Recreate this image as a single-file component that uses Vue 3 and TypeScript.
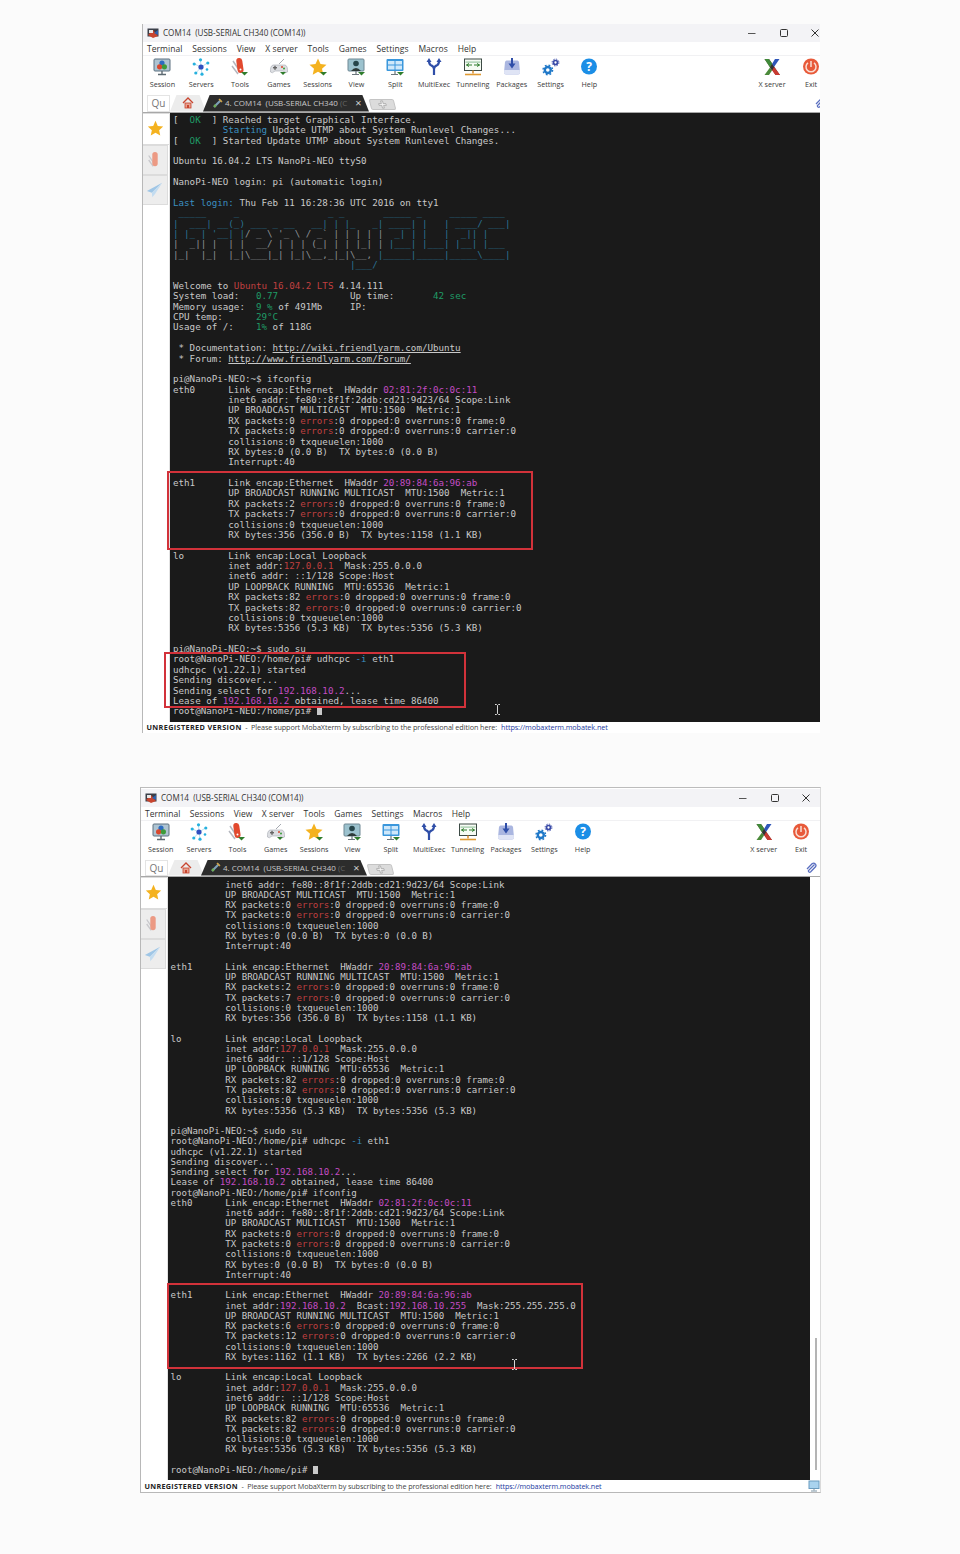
<script setup lang="ts">
type Seg = { c: string; t: string }

function parse(line: string): Seg[] {
  const out: Seg[] = []
  const re = /\{(\w)\|([^}]*)\}/g
  let last = 0
  let m: RegExpExecArray | null
  while ((m = re.exec(line))) {
    if (m.index > last) out.push({ c: '', t: line.slice(last, m.index) })
    out.push({ c: 'c-' + m[1], t: m[2] })
    last = m.index + m[0].length
  }
  if (last < line.length) out.push({ c: '', t: line.slice(last) })
  return out
}

const eth0 = [
  'eth0      Link encap:Ethernet  HWaddr {m|02:81:2f:0c:0c:11}',
  '          inet6 addr: fe80::8f1f:2ddb:cd21:9d23/64 Scope:Link',
  '          UP BROADCAST MULTICAST  MTU:1500  Metric:1',
  '          RX packets:0 {r|errors}:0 dropped:0 overruns:0 frame:0',
  '          TX packets:0 {r|errors}:0 dropped:0 overruns:0 carrier:0',
  '          collisions:0 txqueuelen:1000',
  '          RX bytes:0 (0.0 B)  TX bytes:0 (0.0 B)',
  '          Interrupt:40',
  ''
]
const eth1a = [
  'eth1      Link encap:Ethernet  HWaddr {m|20:89:84:6a:96:ab}',
  '          UP BROADCAST RUNNING MULTICAST  MTU:1500  Metric:1',
  '          RX packets:2 {r|errors}:0 dropped:0 overruns:0 frame:0',
  '          TX packets:7 {r|errors}:0 dropped:0 overruns:0 carrier:0',
  '          collisions:0 txqueuelen:1000',
  '          RX bytes:356 (356.0 B)  TX bytes:1158 (1.1 KB)',
  ''
]
const lo = [
  'lo        Link encap:Local Loopback',
  '          inet addr:{r|127.0.0.1}  Mask:255.0.0.0',
  '          inet6 addr: ::1/128 Scope:Host',
  '          UP LOOPBACK RUNNING  MTU:65536  Metric:1',
  '          RX packets:82 {r|errors}:0 dropped:0 overruns:0 frame:0',
  '          TX packets:82 {r|errors}:0 dropped:0 overruns:0 carrier:0',
  '          collisions:0 txqueuelen:1000',
  '          RX bytes:5356 (5.3 KB)  TX bytes:5356 (5.3 KB)',
  ''
]
const dhcp = [
  'pi@NanoPi-NEO:~$ sudo su',
  'root@NanoPi-NEO:/home/pi# udhcpc {b|-i} eth1',
  'udhcpc (v1.22.1) started',
  'Sending discover...',
  'Sending select for {m|192.168.10.2}...',
  'Lease of {m|192.168.10.2} obtained, lease time 86400'
]

const firstLines = [
  '[  {g|OK}  ] Reached target Graphical Interface.',
  '         {b|Starting} Update UTMP about System Runlevel Changes...',
  '[  {g|OK}  ] Started Update UTMP about System Runlevel Changes.',
  '',
  'Ubuntu 16.04.2 LTS NanoPi-NEO ttyS0',
  '',
  'NanoPi-NEO login: pi (automatic login)',
  '',
  '{b|Last login:} Thu Feb 11 16:28:36 UTC 2016 on tty1',
  "{f| _____     _                _ _       _____ _     _____ ____ }",
  "{f||  ___| __(_) ___ _ __   __| | |_   _| ____| |   | ____/ ___|}",
  "{f|| |_ | '__| |}{q|/ _ \\ '_ \\ / _` | | | | |}{f|  _| | |   |  _|| |    }",
  "{q||  _|| |  | |  __/ | | | (_| | | |_| |}{f| |___| |___| |__| |___ }",
  "{q||_|  |_|  |_|\\___|_| |_|\\__,_|_|\\__,}{f| |_____|_____|_____\\____|}",
  "{f|                                |___/                        }",
  '',
  'Welcome to {r|Ubuntu 16.04.2 LTS} 4.14.111',
  'System load:   {g|0.77}             Up time:       {g|42 sec}',
  'Memory usage:  {g|9 %} of 491Mb     IP:',
  'CPU temp:      {g|29°C}',
  'Usage of /:    {g|1%} of 118G',
  '',
  ' * Documentation: {u|http://wiki.friendlyarm.com/Ubuntu}',
  ' * Forum: {u|http://www.friendlyarm.com/Forum/}',
  '',
  'pi@NanoPi-NEO:~$ ifconfig',
  ...eth0,
  ...eth1a,
  ...lo,
  ...dhcp,
  ''
]

const secondLines = [
  ...eth0.slice(1),
  ...eth1a,
  ...lo,
  ...dhcp,
  'root@NanoPi-NEO:/home/pi# ifconfig',
  ...eth0,
  'eth1      Link encap:Ethernet  HWaddr {m|20:89:84:6a:96:ab}',
  '          inet addr:{m|192.168.10.2}  Bcast:{m|192.168.10.255}  Mask:255.255.255.0',
  '          UP BROADCAST RUNNING MULTICAST  MTU:1500  Metric:1',
  '          RX packets:6 {r|errors}:0 dropped:0 overruns:0 frame:0',
  '          TX packets:12 {r|errors}:0 dropped:0 overruns:0 carrier:0',
  '          collisions:0 txqueuelen:1000',
  '          RX bytes:1162 (1.1 KB)  TX bytes:2266 (2.2 KB)',
  '',
  ...lo,
  ''
]

const windows = [
  { id: 'w1', lines: firstLines.map(parse) },
  { id: 'w2', lines: secondLines.map(parse) }
]

const menu = ['Terminal', 'Sessions', 'View', 'X server', 'Tools', 'Games', 'Settings', 'Macros', 'Help']
const tools = [
  { id: 'session', label: 'Session' },
  { id: 'servers', label: 'Servers' },
  { id: 'tools', label: 'Tools' },
  { id: 'games', label: 'Games' },
  { id: 'sessions', label: 'Sessions' },
  { id: 'view', label: 'View' },
  { id: 'split', label: 'Split' },
  { id: 'multi', label: 'MultiExec' },
  { id: 'tunnel', label: 'Tunneling' },
  { id: 'packages', label: 'Packages' },
  { id: 'settings', label: 'Settings' },
  { id: 'help', label: 'Help' }
]
</script>

<template>
  <div class="page">
    <section v-for="w in windows" :key="w.id" class="win" :class="w.id">
      <header class="title">
        <svg class="logo" viewBox="0 0 12 11" width="12" height="11">
          <rect x="0.5" y="0.5" width="11" height="8" fill="#3a3f48" />
          <path d="M1 7 L6 2 L11 8 L6 10 Z" fill="#c8452f" />
          <path d="M2 2 h4 v3 h-4 Z" fill="#e8e8e8" />
          <path d="M7 5 l4 -3 v5 Z" fill="#2c62b0" />
        </svg>
        <span class="title-text">COM14&nbsp; (USB-SERIAL CH340 (COM14))</span>
        <div class="controls">
          <svg viewBox="0 0 10 10" width="10" height="10"><path d="M1 5.500 H8.500" stroke="#555" fill="none" /></svg>
          <svg viewBox="0 0 10 10" width="10" height="10"><rect x="1.500" y="1.500" width="7" height="7" rx="1" stroke="#333" fill="none" /></svg>
          <svg viewBox="0 0 10 10" width="10" height="10"><path d="M1.500 1.500 L8.500 8.500 M8.500 1.500 L1.500 8.500" stroke="#333" fill="none" /></svg>
        </div>
      </header>

      <nav class="menu">
        <span v-for="m in menu" :key="m">{{ m }}</span>
      </nav>

      <div class="toolbar">
        <div v-for="t in tools" :key="t.id" class="tool">
          <svg class="icon" viewBox="0 0 20 20" width="20" height="20">
            <template v-if="t.id === 'session'">
              <rect x="2" y="2" width="16" height="12" rx="1" fill="#aec4d2" stroke="#5d7180" />
              <circle cx="10" cy="6" r="2.600" fill="#2d6cc0" />
              <circle cx="7.600" cy="9.800" r="2.600" fill="#d9482e" />
              <circle cx="12.400" cy="9.800" r="2.600" fill="#3d9b3a" />
              <path d="M10 14 V17 M6 17.500 H14" stroke="#5d6a72" stroke-width="1.400" />
            </template>
            <template v-else-if="t.id === 'servers'">
              <path d="M10 10 L9.500 3 M10 10 L3.500 7 M10 10 L16.500 6 M10 10 L5 16 M10 10 L11 17" stroke="#9fd2ea" stroke-width="0.700" />
              <circle cx="10" cy="10" r="2.600" fill="#2f4fc0" />
              <circle cx="9.500" cy="2.800" r="1.600" fill="#26b1de" />
              <circle cx="3.200" cy="7" r="1.600" fill="#26b1de" />
              <circle cx="16.800" cy="6" r="1.600" fill="#26b1de" />
              <circle cx="16" cy="12.500" r="1.300" fill="#26b1de" />
              <circle cx="4.800" cy="16" r="1.600" fill="#26b1de" />
              <circle cx="11" cy="17.200" r="1.600" fill="#26b1de" />
            </template>
            <template v-else-if="t.id === 'tools'">
              <path d="M3 4 L9 13 M2 9 L8 17" stroke="#b4b6be" stroke-width="1.500" />
              <rect x="7" y="1" width="6" height="15" rx="3" fill="#e2492e" transform="rotate(-8 10 9)" />
              <circle cx="10.500" cy="12.500" r="1" fill="#fff" />
              <path d="M11 15 h7 l-3.500 3.500 Z" fill="#2f7d2c" />
            </template>
            <template v-else-if="t.id === 'games'">
              <path d="M10 7 L15 2" stroke="#9ca0a8" stroke-width="0.900" />
              <path d="M4 8 H16 Q19 9 18.500 15 Q17 17 14 14 H6 Q3 17 1.500 15 Q1 9 4 8 Z" fill="#dcdee2" stroke="#a6aab2" stroke-width="0.600" />
              <rect x="4" y="10" width="4" height="1.400" fill="#666" />
              <rect x="5.300" y="8.800" width="1.400" height="4" fill="#666" />
              <circle cx="13" cy="10" r="1" fill="#d9482e" />
              <circle cx="15" cy="11.500" r="1" fill="#3d9b3a" />
              <path d="M11 15 h6 l-3 3 Z" fill="#2f7d2c" />
            </template>
            <template v-else-if="t.id === 'sessions'">
              <path d="M10 1.500 L12.500 7 L18.500 7.700 L14 11.800 L15.300 17.800 L10 14.800 L4.700 17.800 L6 11.800 L1.500 7.700 L7.500 7 Z" fill="#f4b21f" />
              <path d="M12 15 h7 l-3.500 3.500 Z" fill="#2f7d2c" />
            </template>
            <template v-else-if="t.id === 'view'">
              <rect x="2" y="2" width="16" height="12" rx="1" fill="#9cc2ce" stroke="#6f8894" />
              <circle cx="10" cy="6.500" r="2.800" fill="#26454a" />
              <path d="M5 14 Q10 8 15 14 Z" fill="#2e3a38" />
              <path d="M10 14 V17 M6 17.500 H13" stroke="#6b767c" stroke-width="1.200" />
              <path d="M12 15 h7 l-3.500 3.500 Z" fill="#2f7d2c" />
            </template>
            <template v-else-if="t.id === 'split'">
              <rect x="1.500" y="2" width="17" height="12" rx="1" fill="#3a97dc" />
              <rect x="3" y="4" width="6.500" height="3.500" fill="#cfe8fa" />
              <rect x="10.500" y="4" width="6.500" height="3.500" fill="#cfe8fa" />
              <rect x="3" y="8.500" width="6.500" height="4" fill="#cfe8fa" />
              <rect x="10.500" y="8.500" width="6.500" height="4" fill="#cfe8fa" />
              <path d="M10 14 V17 M6 17.500 H13" stroke="#6b767c" stroke-width="1.200" />
              <path d="M12 15 h7 l-3.500 3.500 Z" fill="#2f7d2c" />
            </template>
            <template v-else-if="t.id === 'multi'">
              <path d="M10 18 V12 Q10 9.500 7 8.300 Q5 7.300 5 4 M10 12 Q10 9.500 13 8.300 Q15 7.300 15 4" fill="none" stroke="#2f4ea8" stroke-width="2.200" />
              <path d="M2.500 5 L5 1 L7.500 5 Z M12.500 5 L15 1 L17.500 5 Z" fill="#2f4ea8" />
            </template>
            <template v-else-if="t.id === 'tunnel'">
              <rect x="1.500" y="2" width="17" height="11.500" fill="#f6fbf4" stroke="#3d4a45" />
              <rect x="2.500" y="4.500" width="15" height="1.200" fill="#9cc7a4" />
              <path d="M3.500 8 H9 M6 6.500 L3.500 8 L6 9.500 M11 8 H16.500 M14 6.500 L16.500 8 L14 9.500" fill="none" stroke="#2f7d2c" />
              <path d="M10 13.500 V16.500" stroke="#d98a2b" stroke-width="1.500" />
              <path d="M2 17.500 H18" stroke="#e09a32" stroke-width="1.600" />
            </template>
            <template v-else-if="t.id === 'packages'">
              <path d="M4.500 3.500 H15.500 Q16.500 3.500 17 5 L18 15.500 Q18 17.500 16 17.500 H4 Q2 17.500 2 15.500 L3 5 Q3.500 3.500 4.500 3.500 Z" fill="#aab6e0" />
              <path d="M2.200 13 H17.800 L18 15.500 Q18 17.500 16 17.500 H4 Q2 17.500 2 15.500 Z" fill="#dfe4f5" />
              <path d="M10 1 V8" stroke="#2f4ea8" stroke-width="2" />
              <path d="M6.500 6.500 L10 11.500 L13.500 6.500 Z" fill="#2f4ea8" />
            </template>
            <template v-else-if="t.id === 'settings'">
              <circle cx="6.800" cy="13" r="3" fill="none" stroke="#1f78c8" stroke-width="2.400" />
              <circle cx="6.800" cy="13" r="4.800" fill="none" stroke="#1f78c8" stroke-width="1.400" stroke-dasharray="1.800 2.000" />
              <circle cx="14.500" cy="5.500" r="2" fill="none" stroke="#3a4ba8" stroke-width="1.700" />
              <circle cx="14.500" cy="5.500" r="3.400" fill="none" stroke="#3a4ba8" stroke-width="1" stroke-dasharray="1.400 1.270" />
            </template>
            <template v-else>
              <circle cx="10" cy="9.500" r="8" fill="#1b8ee6" />
              <text x="10" y="14" text-anchor="middle" class="qmark">?</text>
            </template>
          </svg>
          <span class="tool-label">{{ t.label }}</span>
        </div>
        <div class="tool tool-x">
          <svg class="icon" viewBox="0 0 20 20" width="20" height="20">
            <path d="M2.500 2 H7 L18 18 H13.500 Z" fill="#7a3030" />
            <path d="M2.500 2 H7 L10.500 7 L8 10.500 Z" fill="#3f8a3a" />
            <path d="M13 2 H17.500 L12 10 L10 7 Z" fill="#2f56b8" />
            <path d="M8 10.500 L10 13.500 L7 18 H2.500 Z" fill="#4b8a3a" />
            <path d="M12 10 L18 18 H13.500 L10 13 Z" fill="#c93a30" />
            <path d="M10 7 L12 10 L10 13.500 L8 10.500 Z" fill="#333" />
          </svg>
          <span class="tool-label">X server</span>
        </div>
        <div class="tool tool-exit">
          <svg class="icon" viewBox="0 0 20 20" width="20" height="20">
            <circle cx="10" cy="9.500" r="8" fill="#e85a3a" />
            <path d="M7 5.800 A5 5 0 1 0 13 5.800" fill="none" stroke="#f9e0d6" stroke-width="1.500" />
            <path d="M10 4 V10" stroke="#f9e0d6" stroke-width="1.500" />
          </svg>
          <span class="tool-label">Exit</span>
        </div>
      </div>

      <div class="tabs">
        <span class="quick">Qu</span>
        <span class="tab-home">
          <svg viewBox="0 0 12 12" width="12" height="12">
            <path d="M1 6 L6 1 L11 6" fill="none" stroke="#c8452f" stroke-width="1.300" />
            <rect x="3" y="6" width="6" height="5" fill="#e8a08e" stroke="#c8452f" stroke-width="0.800" />
            <rect x="5" y="8" width="2" height="3" fill="#c8452f" />
          </svg>
        </span>
        <span class="tab-active">
          <svg viewBox="0 0 10 10" width="10" height="10">
            <path d="M1 9 L8 2" stroke="#7ea0b8" stroke-width="2.200" />
            <path d="M6 1 L9 4" stroke="#d0a040" stroke-width="1.500" />
            <circle cx="2" cy="8" r="1.400" fill="#6fae55" />
          </svg>
          <span class="tab-name">4. COM14&nbsp; (USB-SERIAL CH340 <i>(C</i></span>
          <span class="tab-close">×</span>
        </span>
        <span class="tab-new">
          <svg viewBox="0 0 10 10" width="9" height="9">
            <path d="M4 1 H6 V4 H9 V6 H6 V9 H4 V6 H1 V4 H4 Z" fill="#f4f4f4" stroke="#9a9a9a" stroke-width="0.700" />
          </svg>
        </span>
        <svg class="clip" viewBox="0 0 12 12" width="12" height="12">
          <path d="M9.500 2.500 L3.500 8.500 A1.300 1.300 0 0 0 5.500 10 L10.500 4.800 A2.300 2.300 0 0 0 7.300 1.600 L2 7" fill="none" stroke="#5a6fc0" stroke-width="1.300" />
        </svg>
      </div>

      <div class="body">
        <aside class="side">
          <div class="side-tab is-on">
            <svg viewBox="0 0 20 20" width="17" height="17">
              <path d="M10 1 L12.700 7 L19 7.700 L14.300 12 L15.600 18.300 L10 15 L4.400 18.300 L5.700 12 L1 7.700 L7.300 7 Z" fill="#f4b21f" />
            </svg>
          </div>
          <div class="side-tab">
            <svg viewBox="0 0 20 20" width="18" height="18">
              <path d="M3 5 L9 14 M3 10 L8 17" stroke="#c8c8cc" stroke-width="1.500" />
              <rect x="7" y="1" width="6" height="16" rx="3" fill="#ec9a84" />
            </svg>
          </div>
          <div class="side-tab">
            <svg viewBox="0 0 20 20" width="18" height="18">
              <path d="M18 2 L1 11 L6.500 13 Z" fill="#9fc6e6" />
              <path d="M18 2 L6.500 13 L7 18 L10 14.500 Z" fill="#c3dcf0" />
            </svg>
          </div>
        </aside>

        <main class="term">
          <div class="term-text">
            <div v-for="(line, i) in w.lines" :key="i" class="ln">
              <span v-for="(seg, j) in line" :key="j" :class="seg.c">{{ seg.t }}</span>
              <span v-if="i === w.lines.length - 1">root@NanoPi-NEO:/home/pi# <b class="cursor"></b></span>
            </div>
          </div>
          <template v-if="w.id === 'w1'">
            <div class="mark mark-a"></div>
            <div class="mark mark-b"></div>
          </template>
          <div v-else class="mark mark-c"></div>
          <svg class="ibeam" viewBox="0 0 7 11" width="7" height="11">
            <path d="M1 .5 H2.500 L3.500 1.500 L4.500 .5 H6 M3.500 1.500 V9.500 M1 10.500 H2.500 L3.500 9.500 L4.500 10.500 H6" fill="none" stroke="#d8d8d8" />
          </svg>
        </main>
        <div v-if="w.id === 'w2'" class="scroll"><span class="thumb"></span></div>
      </div>

      <footer class="foot">
        <b>UNREGISTERED VERSION</b>
        <span class="dash">-</span>
        <span>Please support MobaXterm by subscribing to the professional edition here:</span>
        <a>https://mobaxterm.mobatek.net</a>
        <svg v-if="w.id === 'w2'" class="foot-icon" viewBox="0 0 12 12" width="12" height="12">
          <rect x="1" y="1" width="10" height="7.500" fill="#a9d3ef" stroke="#6a9cc0" />
          <path d="M6 8.500 V10.500 M3 11 H9" stroke="#8098a8" />
        </svg>
      </footer>
    </section>
  </div>
</template>

<style>
html, body { margin: 0; background: #fbfbfb; }
</style>

<style scoped>
.page {
  width: 960px;
  height: 1554px;
  box-sizing: border-box;
  padding-top: 24px;
  overflow: hidden;
  font-family: "Open Sans", "Noto Sans", sans-serif;
  color: #333;
}
.win {
  position: relative;
  display: flex;
  flex-direction: column;
  box-sizing: border-box;
  background: #fff;
  overflow: hidden;
  border-left: 1px solid #b8b8b8;
}
.w1 {
  --tool: 38.82px;
  --term: 9.2px;
  --lh: 10.377px;
  --ctrl: 31.5px;
  --pad-x: 3px;
  --pad-y: 2.4px;
  width: 678px;
  height: 709px;
  margin-left: 142px;
}
.w2 {
  --tool: 38.36px;
  --term: 9.1px;
  --lh: 10.27px;
  --ctrl: 31.5px;
  --pad-x: 2.5px;
  --pad-y: 3.2px;
  width: 681px;
  height: 706px;
  margin-left: 140px;
  margin-top: 54px;
  padding-top: 1px;
  border-top: 1px solid #bcbcbc;
  border-right: 1px solid #dadada;
  border-bottom: 1px solid #b8b8b8;
}
.title {
  display: flex;
  align-items: center;
  height: 18px;
  flex: none;
  background: #f3f3f6;
  padding-left: 4px;
  font-size: 8.1px;
}
.title-text { position: relative; top: -1px; }
.logo { margin-right: 4px; }
.controls {
  margin-left: auto;
  display: flex;
  gap: calc(var(--ctrl) - 10px);
}
.w2 .controls { padding-right: 9px; }
.menu {
  display: flex;
  align-items: center;
  gap: 9.9px;
  height: 14px;
  flex: none;
  padding-left: 4px;
  font-size: 8.5px;
  letter-spacing: 0.05px;
  border-bottom: 1px solid #f1f1f3;
  box-sizing: border-box;
}
.w2 .menu { gap: 9.4px; }
.toolbar {
  display: flex;
  height: 39px;
  flex: none;
}
.w2 .toolbar { padding-left: 0.5px; }
.tool {
  display: flex;
  flex-direction: column;
  align-items: center;
  width: var(--tool);
  flex: none;
  padding-top: 1px;
}
.tool-x { margin-left: auto; }
.tool-exit { width: 38px; margin-right: -10px; }
.w1 .tool-x { margin-right: 0.5px; }
.w2 .tool-x { margin-right: -1px; }
.w2 .tool-exit { margin-right: 0; }
.icon { display: block; }
.tool-label {
  font-size: 7.2px;
  line-height: 12px;
  margin-top: 0.5px;
  white-space: nowrap;
  color: #3a3a3a;
}
.qmark {
  fill: #fff;
  font: bold 12px "Open Sans", sans-serif;
}
.tabs {
  display: flex;
  align-items: stretch;
  height: 16.5px;
  flex: none;
  box-sizing: border-box;
  overflow: visible;
}
.w2 .tabs { height: 15.5px; }
.quick {
  width: 23px;
  margin-left: 4px;
  border: 1px solid #e4e4e4;
  box-sizing: border-box;
  font-size: 10px;
  line-height: 14px;
  text-align: center;
  color: #777;
}
.tab-home {
  width: 36px;
  display: flex;
  align-items: center;
  justify-content: center;
  background: #ececec;
  clip-path: polygon(18% 0, 82% 0, 100% 100%, 0 100%);
}
.tab-active {
  display: flex;
  align-items: center;
  gap: 2px;
  width: 166px;
  margin-left: -3px;
  padding: 0 0 1px 10px;
  box-sizing: border-box;
  background: #2c2c2c;
  color: #c9c9c9;
  font-size: 8px;
  white-space: nowrap;
  clip-path: polygon(4% 0, 96% 0, 100% 100%, 0 100%);
}
.tab-name i { color: #666; font-style: normal; }
.tab-close { margin-left: 6px; font-size: 11px; color: #cfcfcf; }
.tab-new {
  width: 23px;
  height: 9px;
  margin: 4px 0 0 1px;
  display: flex;
  align-items: center;
  justify-content: center;
  background: #dcdcdc;
  border: 1px solid #c4c4c4;
  border-radius: 2px;
  transform: skewX(14deg);
}
.clip { margin-left: auto; align-self: center; margin-right: 3px; }
.w1 .clip { margin-right: -6px; }
.body {
  display: flex;
  flex: 1;
  min-height: 0;
  border-top: 1px solid #a8a8a8;
}
.side {
  width: 27px;
  flex: none;
  background: #fff;
  display: flex;
  flex-direction: column;
  border-right: 1px solid #e2e2e2;
  box-sizing: border-box;
}
.side-tab {
  height: 30px;
  display: flex;
  align-items: center;
  justify-content: center;
  padding-right: 1px;
  background: #ededed;
  border: 1px solid #dcdcdc;
  border-left: 0;
  margin-right: 1px;
  box-sizing: border-box;
}
.side-tab.is-on {
  height: 32px;
  background: #fff;
  margin-right: 0;
  border-right: 0;
  padding-right: 2px;
}
.term {
  position: relative;
  flex: 1;
  background: #1a1a1a;
  overflow: visible;
}
.term-text {
  padding: var(--pad-y) 0 0 var(--pad-x);
  font-family: "DejaVu Sans Mono", "Liberation Mono", monospace;
  font-size: var(--term);
  line-height: var(--lh);
  color: #c9c9c9;
  white-space: pre;
}
.ln { height: var(--lh); }
.c-r { color: #c04040; }
.c-m { color: #c44cc4; }
.c-g { color: #1f9a66; }
.c-b { color: #3a8fc0; }
.c-u { text-decoration: underline; }
.c-f { color: #2a7293; }
.c-q { color: #8e9396; }
.cursor {
  display: inline-block;
  width: 5px;
  height: 8px;
  vertical-align: -1px;
  background: #c9c9c9;
}
.mark {
  position: absolute;
  box-sizing: border-box;
  border: 2px solid #d2323a;
  pointer-events: none;
}
.mark-a { left: -3px; top: 358px; width: 366px; height: 79px; }
.mark-b { left: -6px; top: 539px; width: 302px; height: 56px; }
.mark-c { left: -1px; top: 406px; width: 416px; height: 86px; }
.ibeam { position: absolute; }
.w1 .ibeam { left: 324px; top: 591px; }
.w2 .ibeam { left: 343px; top: 482px; }
.scroll {
  width: 10px;
  flex: none;
  background: #fff;
  position: relative;
}
.thumb {
  position: absolute;
  left: 5px;
  top: 461px;
  width: 2px;
  height: 132px;
  background: #b4b4b4;
}
.foot {
  display: flex;
  align-items: center;
  height: 11.5px;
  flex: none;
  padding-left: 3.5px;
  font-size: 7.28px;
  white-space: nowrap;
  background: #fff;
  color: #444;
  letter-spacing: -0.1px;
}
.w2 .foot { height: 12.5px; font-size: 7.22px; }
.foot b { color: #222; letter-spacing: 0.36px; }
.w2 .foot b { letter-spacing: 0.3px; }
.dash { margin: 0 3.5px; }
.foot a { margin-left: 4px; color: #1c3aa0; }
.foot-icon { margin-left: auto; }
</style>
